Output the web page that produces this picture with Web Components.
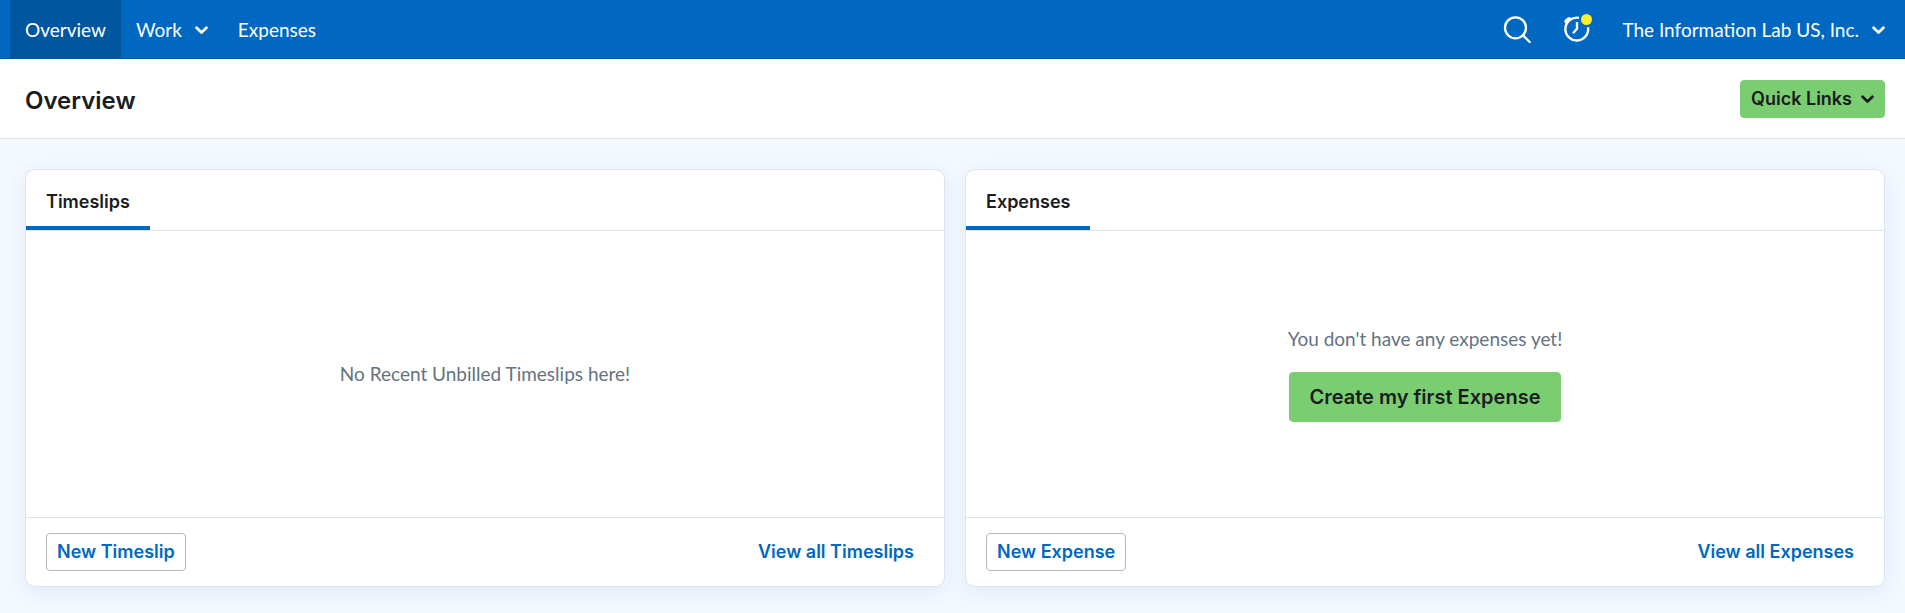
<!DOCTYPE html>
<html lang="en">
<head>
<meta charset="utf-8">
<meta name="viewport" content="width=device-width, initial-scale=1">
<title>Overview</title>
<style>
  :root {
    --blue: #0068c0;
    --blue-dark: #00569f;
    --green: #7acd70;
    --ink: #1a1c20;
    --muted: #647380;
    --line: #dfe4ea;
    --font-text: Lato, "Liberation Sans", sans-serif;
    --font-strong: Inter, "Liberation Sans", sans-serif;
  }
  body {
    margin: 0;
    min-height: 100vh;
    background: #f4f8ff;
    color: var(--ink);
    font: 400 19px/26px var(--font-text);
  }
</style>
</head>
<body>
<overview-page></overview-page>

<script>
const define = (name, html, setup) => {
  const template = document.createElement('template');
  template.innerHTML = html;
  customElements.define(name, class extends HTMLElement {
    constructor() {
      super();
      this.attachShadow({ mode: 'open' }).append(template.content.cloneNode(true));
    }
    connectedCallback() {
      if (setup) setup(this, this.shadowRoot);
    }
  });
};

define('chevron-icon', `
  <style>
    :host { display: block; width: 13px; height: 10px; }
    svg { display: block; width: 100%; height: 100%; }
  </style>
  <svg viewBox="0 0 13 10" fill="none" stroke="currentColor" stroke-width="2.7" stroke-linecap="round" stroke-linejoin="round" aria-hidden="true">
    <path d="M1.6 2.7 6.5 7.5 11.4 2.7"/>
  </svg>`);

define('nav-item', `
  <style>
    :host { display: flex; }
    a, button {
      display: flex; align-items: center; gap: 13px;
      padding: 2px 15px 0; border: 0; background: none;
      color: #fff; font: inherit; text-decoration: none; white-space: nowrap; cursor: pointer;
    }
    :host([current]) a { background: var(--blue-dark); }
  </style>
  <a href="#"><slot></slot></a>`, (host, root) => {
    if (!host.hasAttribute('menu')) return;
    const button = document.createElement('button');
    button.type = 'button';
    button.setAttribute('aria-haspopup', 'true');
    button.append(root.querySelector('slot'), document.createElement('chevron-icon'));
    root.querySelector('a').replaceWith(button);
  });

define('icon-button', `
  <style>
    :host { display: flex; }
    button { display: flex; align-items: center; padding: 0 15px; border: 0; background: none; color: #fff; cursor: pointer; }
    ::slotted(svg) { display: block; width: 30px; height: 30px; }
  </style>
  <button type="button"><slot></slot></button>`, (host, root) => {
    root.querySelector('button').setAttribute('aria-label', host.getAttribute('label'));
  });

define('top-bar', `
  <style>
    :host { display: block; background: var(--blue); border-bottom: 1px solid var(--blue-dark); }
    nav { display: flex; align-items: stretch; min-height: 58px; padding: 0 5px 0 10px; }
    .end { display: flex; margin-left: auto; }
  </style>
  <nav aria-label="Main">
    <nav-item current>Overview</nav-item>
    <nav-item menu>Work</nav-item>
    <nav-item>Expenses</nav-item>
    <div class="end">
      <icon-button label="Search">
        <svg viewBox="0 0 30 30" fill="none" stroke="#fff" stroke-width="2.3" stroke-linecap="round">
          <circle cx="13.5" cy="13.8" r="10.5"/><path d="M21.1 21.4 27.7 28"/>
        </svg>
      </icon-button>
      <icon-button label="Timer">
        <svg viewBox="0 0 30 30" fill="none" stroke="#fff" stroke-width="2.4">
          <path d="M17 3.9A11.4 11.4 0 1 0 26 13.2"/>
          <path d="M4.3 7.2 7 5" stroke-width="4" stroke-linecap="round"/>
          <path d="M15 8V14.8L11 19.2" stroke-linejoin="round"/>
          <circle cx="24.5" cy="5.5" r="5.5" fill="#ffed29" stroke="none"/>
        </svg>
      </icon-button>
      <nav-item menu>The Information Lab US, Inc.</nav-item>
    </div>
  </nav>`);

define('action-button', `
  <style>
    :host { display: inline-flex; }
    button {
      display: flex; align-items: center; gap: 9px;
      box-sizing: border-box; min-height: 38px; padding: 0 10px;
      border: 1px solid #b0b8c0; border-radius: 4px; background: #fff;
      color: var(--blue); font: 600 18px/24px var(--font-strong); white-space: nowrap; cursor: pointer;
    }
    :host([primary]) button { border-color: var(--green); background: var(--green); color: var(--ink); }
    :host([large]) button { min-height: 50px; padding: 0 20px; font-size: 20px; }
  </style>
  <button type="button"><slot></slot></button>`);

define('page-header', `
  <style>
    :host {
      display: flex; align-items: center; justify-content: space-between;
      min-height: 79px; padding: 0 20px 0 25px; background: #fff; border-bottom: 1px solid var(--line);
    }
    h1 { margin: 0; padding-top: 4px; font: 600 24px/30px var(--font-strong); }
  </style>
  <h1><slot></slot></h1>
  <slot name="actions"></slot>`);

define('data-card', `
  <style>
    :host {
      display: flex; flex-direction: column; min-width: 0;
      background: #fff; border: 1px solid var(--line); border-radius: 10px;
      box-shadow: 0 5px 20px rgba(0, 104, 192, .09);
    }
    header { display: flex; border-bottom: 1px solid var(--line); }
    h2 {
      box-sizing: border-box; min-width: 123px; margin: 0; padding: 20px 20px 12px;
      border-bottom: 4px solid var(--blue); font: 600 18px/24px var(--font-strong);
    }
    .body {
      flex: 1; display: flex; flex-direction: column; align-items: center; justify-content: center; gap: 20px;
      min-height: 286px; color: var(--muted); text-align: center;
    }
    footer {
      display: flex; align-items: center; justify-content: space-between;
      padding: 15px 30px 15px 20px; border-top: 1px solid var(--line);
    }
    a { color: var(--blue); font: 600 18px/24px var(--font-strong); text-decoration: none; }
  </style>
  <header><h2><slot name="title"></slot></h2></header>
  <div class="body"><slot></slot></div>
  <footer>
    <slot name="action"></slot>
    <a href="#"><slot name="link"></slot></a>
  </footer>`);

define('overview-page', `
  <style>
    :host { display: block; }
    p { margin: 0; }
    main { display: grid; grid-template-columns: repeat(2, minmax(0, 1fr)); gap: 20px; padding: 30px 20px 25px 25px; }
  </style>
  <top-bar></top-bar>
  <page-header>
    Overview
    <action-button slot="actions" primary>Quick Links<chevron-icon></chevron-icon></action-button>
  </page-header>
  <main>
    <data-card>
      <span slot="title">Timeslips</span>
      <p>No Recent Unbilled Timeslips here!</p>
      <action-button slot="action">New Timeslip</action-button>
      <span slot="link">View all Timeslips</span>
    </data-card>
    <data-card>
      <span slot="title">Expenses</span>
      <p>You don't have any expenses yet!</p>
      <action-button primary large>Create my first Expense</action-button>
      <action-button slot="action">New Expense</action-button>
      <span slot="link">View all Expenses</span>
    </data-card>
  </main>`);
</script>
</body>
</html>
